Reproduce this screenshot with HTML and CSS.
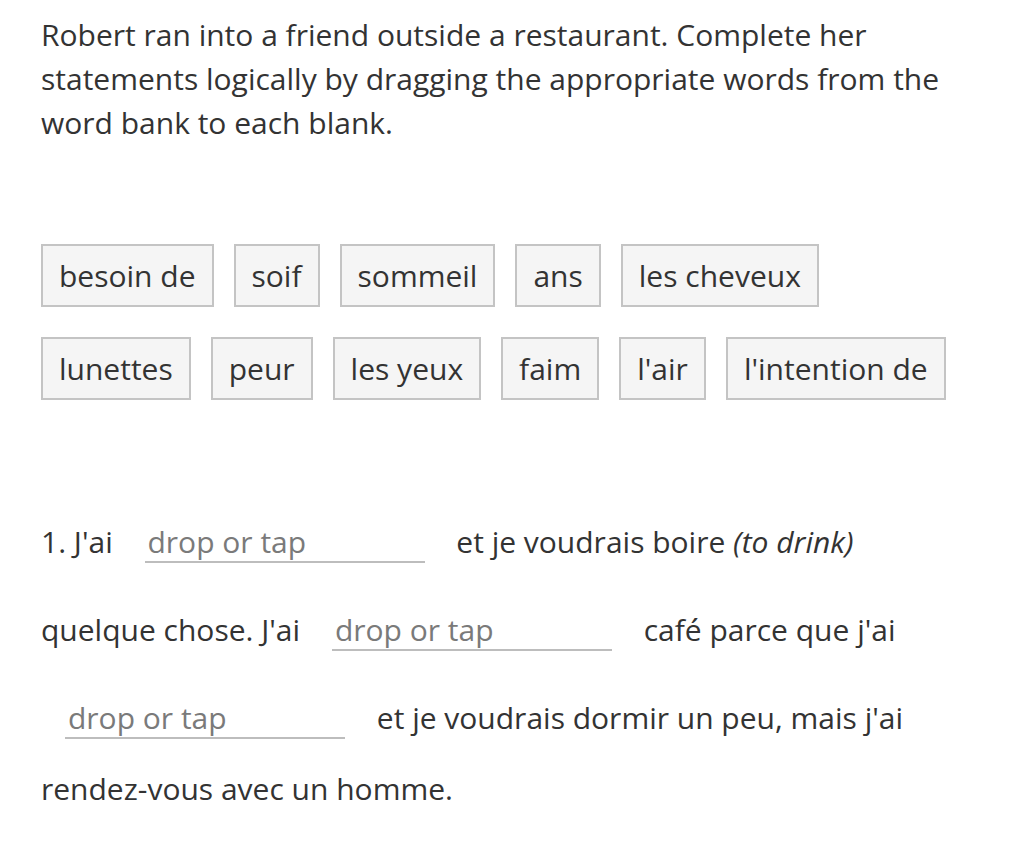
FILE: index.html
```html
<!DOCTYPE html>
<html lang="en">
<head>
<meta charset="utf-8">
<title>Word bank</title>
<link rel="stylesheet" href="styles.css">
</head>
<body>
<main class="page">
  <p class="prompt">Robert ran into a friend outside a restaurant. Complete her statements logically by dragging the appropriate words from the word bank to each blank.</p>

  <div class="bank">
    <div class="bank-row">
      <span class="tile">besoin de</span>
      <span class="tile">soif</span>
      <span class="tile">sommeil</span>
      <span class="tile">ans</span>
      <span class="tile">les cheveux</span>
    </div>
    <div class="bank-row">
      <span class="tile">lunettes</span>
      <span class="tile">peur</span>
      <span class="tile">les yeux</span>
      <span class="tile">faim</span>
      <span class="tile">l'air</span>
      <span class="tile">l'intention de</span>
    </div>
  </div>

  <p class="sentence">1. J'ai <span class="blank">drop or tap</span> et je voudrais boire <em>(to drink)</em> quelque chose. J'ai <span class="blank">drop or tap</span> café parce que j'ai <span class="blank">drop or tap</span> et je voudrais dormir un peu, mais j'ai rendez-vous avec un homme.</p>
</main>
</body>
</html>
```

FILE: styles.css
```css
html, body {
  margin: 0;
  padding: 0;
  background: #ffffff;
}

.page {
  width: 913px;
  padding: 13px 0 0 41px;
  font-family: "Open Sans", "Noto Sans", sans-serif;
  font-size: 30px;
  line-height: 44px;
  color: #333333;
}

.prompt {
  margin: 0;
}

.bank {
  margin-top: 99px;
  display: flex;
  flex-direction: column;
  gap: 30px;
}

.bank-row {
  display: flex;
  gap: 20px;
}

.tile {
  display: inline-block;
  padding: 8px 16px 7px;
  border: 2px solid #c4c4c4;
  background: #f5f5f5;
  white-space: nowrap;
}

.sentence {
  margin: 103px 0 0;
}

.sentence em {
  font-style: italic;
}

.blank {
  display: inline-block;
  box-sizing: border-box;
  width: 280px;
  margin: 20px 24px 28px;
  padding-left: 3px;
  line-height: 38px;
  border-bottom: 2px solid #bdbdbd;
  color: #7a7a7a;
  vertical-align: baseline;
}
```
